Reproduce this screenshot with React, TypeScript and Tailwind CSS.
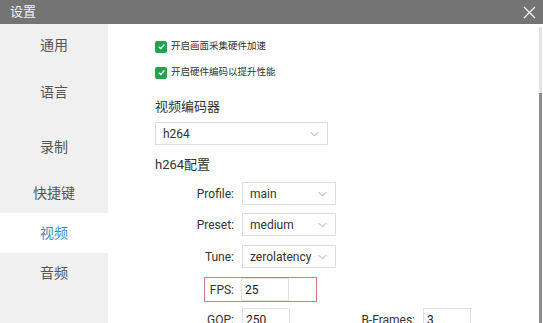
import { ReactNode } from "react";

const font = { fontFamily: 'Roboto, "Noto Sans CJK SC", sans-serif' };

function Check() {
  return (
    <span className="flex h-[12px] w-[12px] items-center justify-center rounded-[2px] bg-[#22a34c]">
      <svg width="9" height="9" viewBox="0 0 10 10">
        <path d="M2 5.2 L4.2 7.3 L8.2 2.8" fill="none" stroke="#fff" strokeWidth="1.6" />
      </svg>
    </span>
  );
}

function Chevron() {
  return (
    <svg width="9" height="6" viewBox="0 0 9 6" className="ml-auto shrink-0">
      <path d="M0.5 1 L4.5 5 L8.5 1" fill="none" stroke="#a8a8a8" strokeWidth="1" />
    </svg>
  );
}

function Select({ value, width }: { value: string; width: string }) {
  return (
    <div className={`flex h-[23px] items-center border border-[#dedede] bg-white pl-[7px] pr-[8px] text-[12px] text-[#333] ${width}`}>
      <span>{value}</span>
      <Chevron />
    </div>
  );
}

function Input({ value }: { value: string }) {
  return (
    <div className="flex h-[23px] w-[48px] shrink-0 items-center border border-[#e2e2e2] bg-white pl-[3px] text-[12px] text-[#222]">
      {value}
    </div>
  );
}

function Row({ label, children, mt }: { label: string; children: ReactNode; mt: string }) {
  return (
    <div className={`flex items-center ${mt}`}>
      <span className="w-[134px] pr-[8px] text-right text-[12px] text-[#333]">{label}</span>
      {children}
    </div>
  );
}

const menu = [
  { name: "通用", mt: "mt-[1px]" },
  { name: "语言", mt: "mt-[7px]" },
  { name: "录制", mt: "mt-[15px]" },
  { name: "快捷键", mt: "mt-[6px]" },
  { name: "视频", mt: "mt-0", active: true },
  { name: "音频", mt: "mt-0" },
];

export default function App() {
  return (
    <div className="flex h-[323px] w-[543px] flex-col overflow-hidden bg-white" style={font}>
      <div className="flex h-[24px] shrink-0 items-center justify-between bg-[#747474] pl-[10px] pr-[7px]">
        <span className="text-[13px] text-[#f2f2f2]">设置</span>
        <svg width="13" height="13" viewBox="0 0 13 13">
          <path d="M1 1 L12 12 M12 1 L1 12" stroke="#f4f4f4" strokeWidth="1.3" />
        </svg>
      </div>
      <div className="flex min-h-0 flex-1">
        <div className="flex w-[108px] shrink-0 flex-col bg-[#f0f0f0]">
          {menu.map((m) => (
            <div
              key={m.name}
              className={`flex h-[40px] items-center justify-center text-[14px] ${m.mt} ${
                m.active ? "bg-white text-[#3f8ac6]" : "text-[#555]"
              }`}
            >
              {m.name}
            </div>
          ))}
        </div>
        <div className="flex min-w-0 flex-1 flex-col">
          <div className="ml-[73px] h-[2px] w-[80px] bg-[#c9cdd8]" />
          <div className="ml-[47px] mt-[16px] flex h-[13px] items-center gap-[4px] text-[9.5px] text-[#333]">
            <Check />
            <span>开启画面采集硬件加速</span>
          </div>
          <div className="ml-[47px] mt-[13px] flex h-[13px] items-center gap-[4px] text-[9.5px] text-[#333]">
            <Check />
            <span>开启硬件编码以提升性能</span>
          </div>
          <div className="ml-[47px] mt-[20px] text-[13px] leading-[16px] text-[#333]">视频编码器</div>
          <div className="ml-[47px] mt-[7px]">
            <Select value="h264" width="w-[173px]" />
          </div>
          <div className="ml-[47px] mt-[12px] text-[13px] leading-[16px] text-[#333]">h264配置</div>
          <Row label="Profile:" mt="mt-[9px]">
            <Select value="main" width="w-[94px]" />
          </Row>
          <Row label="Preset:" mt="mt-[8px]">
            <Select value="medium" width="w-[94px]" />
          </Row>
          <Row label="Tune:" mt="mt-[9px]">
            <Select value="zerolatency" width="w-[94px]" />
          </Row>
          <div className="ml-[96px] mt-[9px] flex h-[25px] w-[113px] items-center border border-[#d27a7a]">
            <span className="w-[36px] shrink-0 pr-[7px] text-right text-[12px] text-[#333]">FPS:</span>
            <Input value="25" />
          </div>
          <div className="mt-[6px] flex items-start">
            <span className="w-[134px] shrink-0 pr-[8px] pt-[3px] text-right text-[12px] text-[#333]">GOP:</span>
            <Input value="250" />
            <span className="w-[133px] shrink-0 pr-[8px] pt-[3px] text-right text-[12px] text-[#333]">B-Frames:</span>
            <Input value="3" />
          </div>
        </div>
        <div className="flex w-[4px] shrink-0 flex-col pt-[3px]">
          <div className="h-[66px] w-[3px] bg-[#e4e4e4]" />
          <div className="w-[3px] flex-1 bg-[#8c8c8c]" />
        </div>
      </div>
    </div>
  );
}
